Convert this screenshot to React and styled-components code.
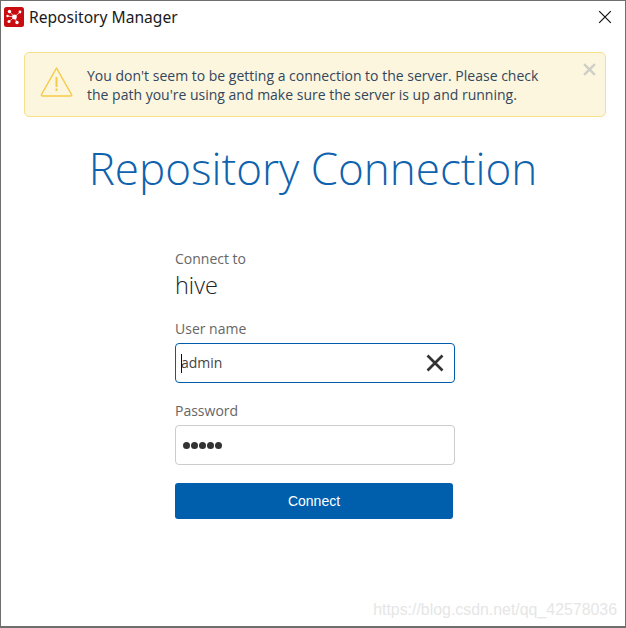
import React from 'react';
import styled, { createGlobalStyle } from 'styled-components';

const Global = createGlobalStyle`
    html, body {
        margin: 0;
        padding: 0;
        background: #ffffff;
    }
`;

const Window = styled.div`
    width: 626px;
    height: 628px;
    box-sizing: border-box;
    border: 1px solid #6f6f6f;
    border-bottom-width: 2px;
    background: #ffffff;
    font-family: 'Open Sans', sans-serif;
    position: relative;
    overflow: hidden;
`;

const TitleBar = styled.div`
    height: 31px;
    padding: 0 8px 0 3px;
    display: flex;
    align-items: center;
    gap: 5px;
`;

const AppTitle = styled.span`
    flex-grow: 1;
    font-family: 'Noto Sans', sans-serif;
    font-size: 15.6px;
    color: #1a1a1a;
`;

const WindowClose = styled.button`
    width: 24px;
    height: 24px;
    padding: 0;
    border: none;
    background: transparent;
    display: flex;
    align-items: center;
    justify-content: center;
`;

const Alert = styled.div`
    margin: 20px 19px 0 23px;
    height: 65px;
    box-sizing: border-box;
    padding: 13px 9px 0 15px;
    border: 1px solid #f7e08a;
    border-radius: 5px;
    background: #fcf6df;
    display: flex;
    gap: 14px;
`;

const AlertText = styled.div`
    flex-grow: 1;
    font-size: 14px;
    line-height: 19px;
    color: #33465c;
`;

const AlertClose = styled.span`
    display: flex;
    margin-top: -3px;
`;

const Heading = styled.h1`
    margin: 23px 0 0;
    text-align: center;
    font-size: 44px;
    line-height: 56px;
    font-weight: 300;
    color: #0f62ad;
`;

const Form = styled.div`
    width: 280px;
    margin: 53px 0 0 174px;
    display: flex;
    flex-direction: column;
`;

const Label = styled.div`
    font-size: 14px;
    line-height: 19px;
    color: #666666;
`;

const Server = styled.div`
    font-size: 23.5px;
    line-height: 30px;
    font-weight: 300;
    color: #222222;
    margin: 2px 0 19px;
`;

const Field = styled.div`
    height: 40px;
    box-sizing: border-box;
    margin: 5px 0 18px;
    padding: 0 10px 0 5px;
    border: 1px solid ${(props) => (props.$focused ? '#005cab' : '#cccccc')};
    border-radius: 4px;
    display: flex;
    align-items: center;
    justify-content: space-between;
    font-size: 14px;
    color: #444444;
`;

const Value = styled.span`
    position: relative;
    line-height: 19px;
    margin-top: -2px;
`;

const Caret = styled.i`
    position: absolute;
    left: 0;
    top: 1px;
    width: 1px;
    height: 19px;
    background: #111111;
`;

const Dots = styled.span`
    display: flex;
    gap: 1px;
    margin-left: 2px;
`;

const Dot = styled.i`
    width: 7px;
    height: 7px;
    border-radius: 50%;
    background: #333333;
`;

const ConnectButton = styled.button`
    width: 278px;
    height: 36px;
    border: none;
    border-radius: 3px;
    background: #005fad;
    color: #ffffff;
    font-family: 'Liberation Sans', sans-serif;
    font-size: 14px;
`;

const Watermark = styled.div`
    position: absolute;
    right: 8px;
    bottom: 7px;
    font-family: 'Liberation Sans', sans-serif;
    font-size: 15.9px;
    color: #e6e6e6;
`;

const AppLogo = () => (
    <svg width="20" height="20" viewBox="0 0 20 20">
        <rect width="20" height="20" rx="2.5" fill="#c90c0f" />
        <path
            d="M10.5 10 L5.5 4.5 M10.5 10 L16 5 M10.5 10 L3.5 9 M10.5 10 L5 14.5 M10.5 10 L13 15.5"
            stroke="#f7c4c4"
            strokeWidth="0.9"
        />
        <g fill="#ffffff">
            <circle cx="10.5" cy="10" r="2.4" />
            <circle cx="5.5" cy="4.5" r="1.7" />
            <circle cx="16" cy="5" r="1.4" />
            <circle cx="3.5" cy="9" r="1.2" />
            <circle cx="5" cy="14.5" r="1.5" />
            <circle cx="13" cy="15.5" r="1.7" />
        </g>
    </svg>
);

const WarningIcon = () => (
    <svg width="33" height="31" viewBox="0 0 33 31" fill="none">
        <path
            d="M16.5 2 L31.5 28.5 Q32 30 30.5 30 L2.5 30 Q1 30 1.5 28.5 Z"
            stroke="#f5cb4a"
            strokeWidth="1.5"
            strokeLinejoin="round"
        />
        <path d="M16.5 11 V21" stroke="#f5cb4a" strokeWidth="2" />
        <rect x="15.5" y="22.5" width="2" height="2.5" fill="#f5cb4a" />
    </svg>
);

const Cross = ({ size, color, width }) => (
    <svg width={size} height={size} viewBox="0 0 12 12" fill="none">
        <path d="M1 1 L11 11 M11 1 L1 11" stroke={color} strokeWidth={width} />
    </svg>
);

const App = () => (
    <Window>
        <Global />
        <TitleBar>
            <AppLogo />
            <AppTitle>Repository Manager</AppTitle>
            <WindowClose>
                <Cross size={14} color="#111111" width={1} />
            </WindowClose>
        </TitleBar>
        <Alert>
            <WarningIcon />
            <AlertText>
                You don't seem to be getting a connection to the server. Please check
                <br />
                the path you're using and make sure the server is up and running.
            </AlertText>
            <AlertClose>
                <Cross size={13} color="#cfcfc8" width={2.2} />
            </AlertClose>
        </Alert>
        <Heading>Repository Connection</Heading>
        <Form>
            <Label>Connect to</Label>
            <Server>hive</Server>
            <Label>User name</Label>
            <Field $focused>
                <Value>
                    <Caret />
                    admin
                </Value>
                <Cross size={18} color="#333333" width={1.8} />
            </Field>
            <Label>Password</Label>
            <Field>
                <Dots>
                    {[0, 1, 2, 3, 4].map((n) => <Dot key={n} />)}
                </Dots>
            </Field>
            <ConnectButton>Connect</ConnectButton>
        </Form>
        <Watermark>https://blog.csdn.net/qq_42578036</Watermark>
    </Window>
);

export default App;
